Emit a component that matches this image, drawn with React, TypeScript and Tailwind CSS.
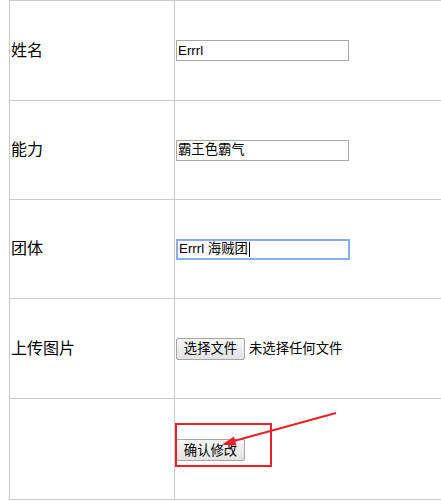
import React from 'react';

const font = { fontFamily: '"Liberation Sans", Arial, "Noto Sans CJK SC", sans-serif' };

// Fake text field, so the focused one can show its caret
const Field: React.FC<{ value: string; focused?: boolean }> = ({ value, focused }) => (
    <div
        className={`flex items-center h-[21px] px-[1px] bg-white text-[13.33px] text-black whitespace-nowrap ${
            focused ? 'w-[174px] border-2 border-[#88afea]' : 'w-[173px] border border-[#a9a9a9]'
        }`}
    >
        <span>{value}</span>
        {focused && <span className="inline-block w-px h-[15px] bg-black ml-px" />}
    </div>
);

const OldButton: React.FC<{ label: string }> = ({ label }) => (
    <button className="h-[22px] w-[69px] border border-[#a6a6a6] rounded-[2px] bg-gradient-to-b from-[#f7f7f7] to-[#e3e3e3] text-[13.33px] text-black leading-none">
        {label}
    </button>
);

const Row: React.FC<{ label: string; height: string; last?: boolean; children?: React.ReactNode }> = ({ label, height, last, children }) => (
    <div className={`flex border-t border-[#cbcbcb] ${last ? 'border-b' : ''} ${height}`}>
        <div className="w-[166px] shrink-0 flex items-center pl-[1px] border-l border-r border-[#cbcbcb] text-[16px] text-black">
            {label}
        </div>
        <div className="flex-1 flex items-center pl-[1px]">{children}</div>
    </div>
);

export default function App() {
    return (
        <div className="relative w-[441px] h-[501px] overflow-hidden bg-white" style={font}>
            <div className="pl-[9px]">
                <Row label="姓名" height="h-[100px]">
                    <Field value="Errrl" />
                </Row>
                <Row label="能力" height="h-[99px]">
                    <Field value="霸王色霸气" />
                </Row>
                <Row label="团体" height="h-[99px]">
                    <Field value="Errrl 海贼团" focused />
                </Row>
                <Row label="上传图片" height="h-[100px]">
                    <div className="flex items-center gap-[4px]">
                        <OldButton label="选择文件" />
                        <span className="text-[13.33px] text-black">未选择任何文件</span>
                    </div>
                </Row>
                <Row label="" height="h-[102px]" last>
                    <div className="mt-[1px]">
                        <OldButton label="确认修改" />
                    </div>
                </Row>
            </div>

            {/* annotation: red box + arrow */}
            <div className="absolute left-[175px] top-[423px] w-[97px] h-[44px] border-2 border-[#e8212b] pointer-events-none" />
            <svg className="absolute inset-0 pointer-events-none" width="441" height="501" viewBox="0 0 441 501">
                <line x1="336" y1="413" x2="232" y2="441.5" stroke="#e8212b" strokeWidth="2" />
                <polygon points="222,444.5 234,436.5 236.5,445.5" fill="#e8212b" />
            </svg>
        </div>
    );
}
